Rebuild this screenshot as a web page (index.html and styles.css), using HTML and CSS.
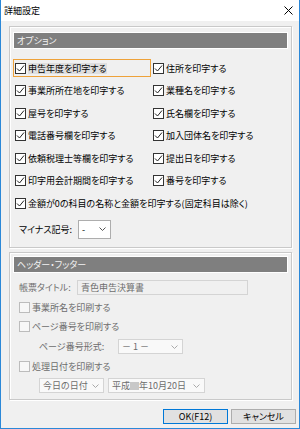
FILE: index.html
```html
<!DOCTYPE html>
<html lang="ja">
<head>
  <meta charset="UTF-8">
  <title>詳細設定</title>
  <link rel="stylesheet" href="styles.css">
</head>
<body>
  <div class="window">
    <div class="titlebar">
      <span class="title">詳細設定</span>
      <svg class="close" width="9" height="9" viewBox="0 0 9 9"><path d="M0.5 0.5L8.5 8.5M8.5 0.5L0.5 8.5" stroke="#000" stroke-width="1"/></svg>
    </div>

    <div class="group group-options">
      <div class="group-head">オプション</div>
      <div class="opts">
        <label class="check focus"><span class="box"><svg width="9" height="9" viewBox="0 0 9 9"><path d="M1 4.5L3.5 7L8 1.5" fill="none" stroke="#222" stroke-width="1"/></svg></span><span class="txt">申告年度を印字する</span></label>
        <label class="check"><span class="box"><svg width="9" height="9" viewBox="0 0 9 9"><path d="M1 4.5L3.5 7L8 1.5" fill="none" stroke="#222" stroke-width="1"/></svg></span><span class="txt">住所を印字する</span></label>
        <label class="check"><span class="box"><svg width="9" height="9" viewBox="0 0 9 9"><path d="M1 4.5L3.5 7L8 1.5" fill="none" stroke="#222" stroke-width="1"/></svg></span><span class="txt">事業所所在地を印字する</span></label>
        <label class="check"><span class="box"><svg width="9" height="9" viewBox="0 0 9 9"><path d="M1 4.5L3.5 7L8 1.5" fill="none" stroke="#222" stroke-width="1"/></svg></span><span class="txt">業種名を印字する</span></label>
        <label class="check"><span class="box"><svg width="9" height="9" viewBox="0 0 9 9"><path d="M1 4.5L3.5 7L8 1.5" fill="none" stroke="#222" stroke-width="1"/></svg></span><span class="txt">屋号を印字する</span></label>
        <label class="check"><span class="box"><svg width="9" height="9" viewBox="0 0 9 9"><path d="M1 4.5L3.5 7L8 1.5" fill="none" stroke="#222" stroke-width="1"/></svg></span><span class="txt">氏名欄を印字する</span></label>
        <label class="check"><span class="box"><svg width="9" height="9" viewBox="0 0 9 9"><path d="M1 4.5L3.5 7L8 1.5" fill="none" stroke="#222" stroke-width="1"/></svg></span><span class="txt">電話番号欄を印字する</span></label>
        <label class="check"><span class="box"><svg width="9" height="9" viewBox="0 0 9 9"><path d="M1 4.5L3.5 7L8 1.5" fill="none" stroke="#222" stroke-width="1"/></svg></span><span class="txt">加入団体名を印字する</span></label>
        <label class="check"><span class="box"><svg width="9" height="9" viewBox="0 0 9 9"><path d="M1 4.5L3.5 7L8 1.5" fill="none" stroke="#222" stroke-width="1"/></svg></span><span class="txt">依頼税理士等欄を印字する</span></label>
        <label class="check"><span class="box"><svg width="9" height="9" viewBox="0 0 9 9"><path d="M1 4.5L3.5 7L8 1.5" fill="none" stroke="#222" stroke-width="1"/></svg></span><span class="txt">提出日を印字する</span></label>
        <label class="check"><span class="box"><svg width="9" height="9" viewBox="0 0 9 9"><path d="M1 4.5L3.5 7L8 1.5" fill="none" stroke="#222" stroke-width="1"/></svg></span><span class="txt">印字用会計期間を印字する</span></label>
        <label class="check"><span class="box"><svg width="9" height="9" viewBox="0 0 9 9"><path d="M1 4.5L3.5 7L8 1.5" fill="none" stroke="#222" stroke-width="1"/></svg></span><span class="txt">番号を印字する</span></label>
        <label class="check wide"><span class="box"><svg width="9" height="9" viewBox="0 0 9 9"><path d="M1 4.5L3.5 7L8 1.5" fill="none" stroke="#222" stroke-width="1"/></svg></span><span class="txt">金額が0の科目の名称と金額を印字する(固定科目は除く)</span></label>
      </div>
      <div class="minus-row">
        <span class="field-label">マイナス記号:</span>
        <span class="combo combo-minus"><span class="val">-</span><svg width="7" height="4" viewBox="0 0 7 4"><path d="M0.5 0.5L3.5 3.5L6.5 0.5" fill="none" stroke="#555" stroke-width="1"/></svg></span>
      </div>
    </div>

    <div class="group group-header">
      <div class="group-head">ヘッダー・フッター</div>
      <div class="row">
        <span class="field-label disabled">帳票タイトル:</span>
        <span class="textbox">青色申告決算書</span>
      </div>
      <div class="row">
        <label class="check disabled"><span class="box"></span><span class="txt">事業所名を印刷する</span></label>
      </div>
      <div class="row">
        <label class="check disabled"><span class="box"></span><span class="txt">ページ番号を印刷する</span></label>
      </div>
      <div class="row indent">
        <span class="field-label disabled page-label">ページ番号形式:</span>
        <span class="combo off combo-page"><span class="val">－ 1 －</span><svg width="7" height="4" viewBox="0 0 7 4"><path d="M0.5 0.5L3.5 3.5L6.5 0.5" fill="none" stroke="#aaa" stroke-width="1"/></svg></span>
      </div>
      <div class="row">
        <label class="check disabled"><span class="box"></span><span class="txt">処理日付を印刷する</span></label>
      </div>
      <div class="row indent">
        <span class="combo off combo-today"><span class="val">今日の日付</span><svg width="7" height="4" viewBox="0 0 7 4"><path d="M0.5 0.5L3.5 3.5L6.5 0.5" fill="none" stroke="#aaa" stroke-width="1"/></svg></span>
        <span class="combo off combo-date"><span class="val">平成<span class="blank"></span>年10月20日</span><svg width="7" height="4" viewBox="0 0 7 4"><path d="M0.5 0.5L3.5 3.5L6.5 0.5" fill="none" stroke="#aaa" stroke-width="1"/></svg></span>
      </div>
    </div>

    <div class="buttons">
      <button class="btn btn-ok">OK(F12)</button>
      <button class="btn">キャンセル</button>
    </div>
  </div>
</body>
</html>
```

FILE: styles.css
```css
body { margin: 0; font-family: "Noto Sans CJK JP", "Noto Sans", sans-serif; font-size: 9px; color: #000; font-feature-settings: "palt"; }
.window { width: 300px; height: 429px; box-sizing: border-box; border: 1px solid #2b88d8; border-top: 0; background: #f0f0f0; }

.titlebar { height: 21px; background: #fff; display: flex; align-items: center; justify-content: space-between; padding: 0 6px 0 3px; }
.title { font-size: 9px; line-height: 21px; }
.close { display: block; }

.group { box-sizing: border-box; width: 283px; margin-left: 8px; border: 1px solid #c9c9c9; box-shadow: 1px 1px 0 #fff, inset 1px 1px 0 #fff; }
.group-options { margin-top: 5px; height: 222px; }
.group-header { margin-top: 4px; height: 148px; }
.group-head { margin: 5px 3px 0; height: 15px; line-height: 15px; border: 1px solid #fff; background: #7f7f7f; color: #f2f2f2; padding-left: 3px; }
.group-header .group-head { margin-top: 3px; }

.opts { display: grid; grid-template-columns: 138px 1fr; grid-auto-rows: 22.5px; margin: 8px 0 0 3px; align-items: center; }
.check { display: flex; align-items: center; height: 16px; border: 1px solid transparent; padding-left: 1px; }
.check.wide { grid-column: 1 / 3; }
.check.focus { border-color: #eea23a; }
.check.focus .txt { background: #dedede; }
.box { width: 9px; height: 9px; border: 1px solid #333; background: #fff; display: flex; align-items: center; justify-content: center; flex: none; }
.box svg { display: block; }
.txt { margin-left: 2px; line-height: 11px; white-space: nowrap; }

.check.disabled .box { border-color: #bcbcbc; background: #f7f7f7; }
.disabled, .check.disabled .txt { color: #6d6d6d; }

.minus-row { display: flex; align-items: center; height: 29px; padding-left: 9px; }
.field-label { width: 59px; flex: none; white-space: nowrap; }

.combo { display: flex; align-items: center; justify-content: space-between; box-sizing: border-box; background: #fff; border: 1px solid #adadad; padding: 0 4px 0 3px; }
.combo svg { display: block; flex: none; }
.combo-minus { width: 33px; height: 19px; }
.combo.off { height: 15px; border-color: #d4d4d4; background: #f9f9f9; color: #6d6d6d; }
.combo-page { width: 65px; }
.combo-today { width: 65px; }
.combo-date { width: 97px; margin-left: 4px; }
.blank { display: inline-block; width: 9px; height: 8px; background: #c8c8c8; vertical-align: -1px; }

.group-header .group-head + .row { margin-top: 5px; }
.row { display: flex; align-items: center; height: 19.6px; padding-left: 9px; }
.row .check { margin-left: -2px; }
.row.indent { padding-left: 29px; }
.page-label { width: 79px; }
.textbox { box-sizing: border-box; width: 171px; height: 15px; margin-left: -1px; border: 1px solid #d4d4d4; background: #f0f0f0; color: #6d6d6d; padding-left: 3px; line-height: 13px; }

.buttons { display: flex; justify-content: flex-end; gap: 3px; margin-top: 9px; padding-right: 3px; }
.btn { box-sizing: border-box; width: 65px; height: 15px; padding: 0; font: inherit; font-size: 9px; line-height: 13px; color: #000; background: #e1e1e1; border: 1px solid #adadad; }
.btn-ok { border-color: #0078d7; }
```
